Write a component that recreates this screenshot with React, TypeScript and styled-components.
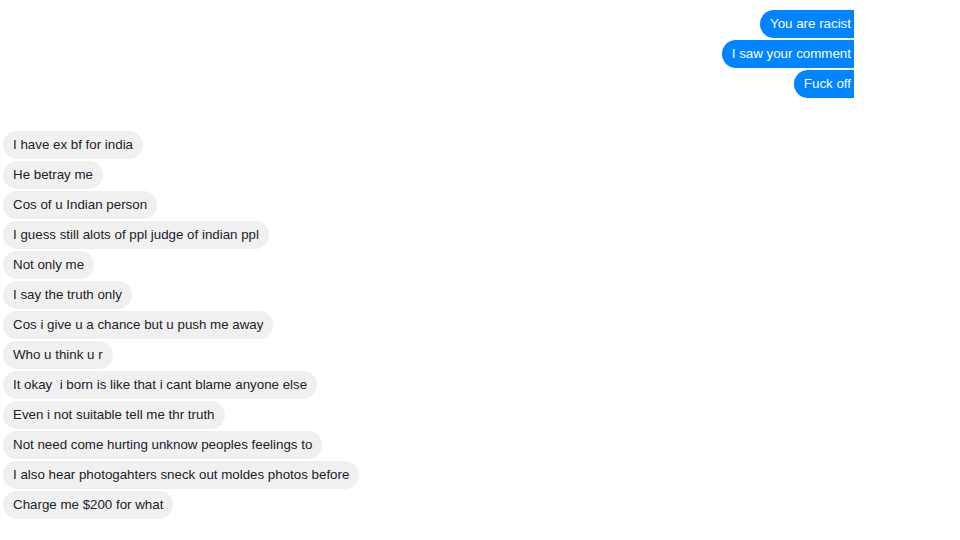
import React from 'react';
import styled, {createGlobalStyle} from 'styled-components';

const GlobalStyle = createGlobalStyle`
  html, body {
    margin: 0;
    padding: 0;
    background: #fff;
  }
  body {
    font-family: "Liberation Sans", Arial, sans-serif;
  }
`;

const Page = styled.div`
  width: 960px;
  height: 540px;
  overflow: hidden;
  display: flex;
  flex-direction: column;
  padding: 10px 0 0 3px;
  box-sizing: border-box;
`;

const Group = styled.div<{ $mine?: boolean }>`
  display: flex;
  flex-direction: column;
  align-items: ${p => (p.$mine ? 'flex-end' : 'flex-start')};
  gap: 2px;
  padding-right: ${p => (p.$mine ? '106px' : '0')};
  margin-bottom: ${p => (p.$mine ? '33px' : '0')};
`;

const Bubble = styled.div<{ $mine?: boolean }>`
  height: 28px;
  line-height: 27px;
  font-size: 13.33px;
  white-space: pre;
  box-sizing: border-box;
  color: ${p => (p.$mine ? '#fff' : '#1d2129')};
  background: ${p => (p.$mine ? '#0084ff' : '#f1f0f0')};
  border-radius: ${p => (p.$mine ? '14px 0 0 14px' : '14px')};
  padding: ${p => (p.$mine ? '0 3px 0 10px' : '0 10px')};
`;

const mine = ['You are racist', 'I saw your comment', 'Fuck off'];

const theirs = [
  'I have ex bf for india',
  'He betray me',
  'Cos of u Indian person',
  'I guess still alots of ppl judge of indian ppl',
  'Not only me',
  'I say the truth only',
  'Cos i give u a chance but u push me away',
  'Who u think u r',
  'It okay  i born is like that i cant blame anyone else',
  'Even i not suitable tell me thr truth',
  'Not need come hurting unknow peoples feelings to',
  'I also hear photogahters sneck out moldes photos before',
  'Charge me $200 for what',
];

function App() {
  return (
    <>
      <GlobalStyle/>
      <Page>
        <Group $mine>
          {mine.map(m => <Bubble $mine key={m}>{m}</Bubble>)}
        </Group>
        <Group>
          {theirs.map(m => <Bubble key={m}>{m}</Bubble>)}
        </Group>
      </Page>
    </>
  );
}

export default App;
